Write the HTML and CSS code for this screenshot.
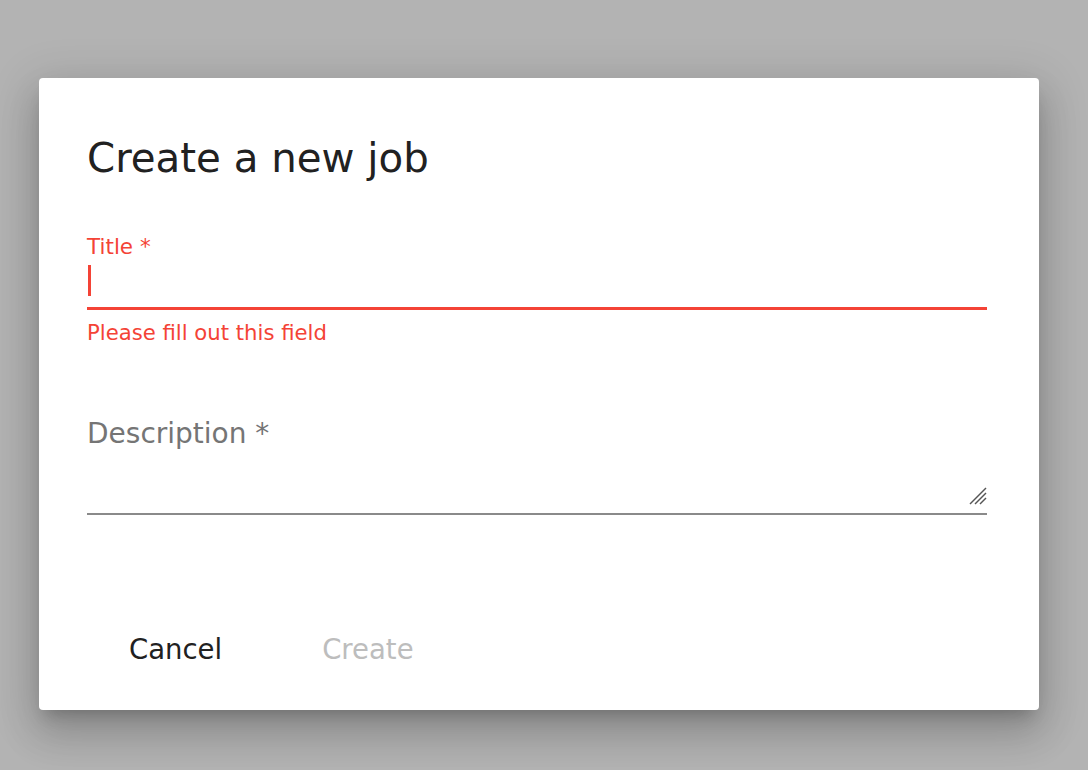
FILE: index.html
```html
<!DOCTYPE html>
<html>
<head>
<meta charset="utf-8">
<link rel="stylesheet" href="styles.css">
</head>
<body>
<div class="backdrop">
  <div class="dialog">
    <h1 class="dialog-title">Create a new job</h1>
    <div class="field field-error">
      <label class="field-label">Title *</label>
      <div class="field-input"><span class="caret"></span></div>
      <div class="field-help">Please fill out this field</div>
    </div>
    <div class="field field-desc">
      <div class="desc-box">
        <span class="desc-label">Description *</span>
        <textarea class="desc-area"></textarea>
        <svg class="resizer" width="18" height="18" viewBox="0 0 18 18">
          <line x1="1" y1="17" x2="17" y2="1" />
          <line x1="6" y1="17" x2="17" y2="6" />
          <line x1="11" y1="17" x2="17" y2="11" />
        </svg>
      </div>
    </div>
    <div class="actions">
      <button class="btn">Cancel</button>
      <button class="btn btn-disabled">Create</button>
    </div>
  </div>
</div>
</body>
</html>
```
FILE: styles.css
```css
html, body {
  margin: 0;
  padding: 0;
  height: 100%;
}
body {
  font-family: "DejaVu Sans", sans-serif;
  background: #b3b3b3;
}
.backdrop {
  height: 100%;
  display: flex;
  padding: 78px 0 0 39px;
  box-sizing: border-box;
}
.dialog {
  width: 1000px;
  height: 632px;
  background: #fff;
  border-radius: 4px;
  box-shadow: 0 11px 15px -7px rgba(0,0,0,0.2), 0 24px 38px 3px rgba(0,0,0,0.14), 0 9px 46px 8px rgba(0,0,0,0.12);
  padding: 0 52px 0 48px;
  box-sizing: border-box;
  display: flex;
  flex-direction: column;
}
.dialog-title {
  margin: 0;
  padding-top: 57px;
  font-weight: normal;
  font-size: 40.3px;
  line-height: 48px;
  color: #212121;
}
.field {
  display: flex;
  flex-direction: column;
}
.field-error {
  margin-top: 51px;
}
.field-label {
  font-size: 21.5px;
  line-height: 26px;
  color: #f44336;
}
.field-input {
  height: 50px;
  border-bottom: 3px solid #f44336;
  display: flex;
  align-items: flex-start;
  padding-top: 5px;
  box-sizing: border-box;
}
.caret {
  width: 2.5px;
  height: 31px;
  margin-left: 1px;
  background: #f44336;
}
.field-help {
  font-size: 21.2px;
  line-height: 26px;
  margin-top: 10px;
  color: #f44336;
}
.field-desc {
  margin-top: 71px;
}
.desc-box {
  position: relative;
  border-bottom: 2px solid #8a8a8a;
  height: 98px;
  box-sizing: border-box;
}
.desc-label {
  position: absolute;
  left: 0;
  top: 0;
  font-size: 28px;
  line-height: 34px;
  color: #757575;
  pointer-events: none;
}
.desc-area {
  display: block;
  width: 100%;
  height: 96px;
  border: none;
  outline: none;
  margin: 0;
  padding: 0;
  resize: none;
  background: transparent;
  font-family: inherit;
}
.resizer {
  position: absolute;
  right: 0;
  bottom: 8px;
  stroke: #555;
  stroke-width: 1.4;
}
.actions {
  margin-top: auto;
  margin-bottom: 35px;
  display: flex;
  gap: 16px;
}
.btn {
  font-family: "DejaVu Sans", sans-serif;
  font-size: 27.5px;
  line-height: 52px;
  background: none;
  border: none;
  padding: 0 42px;
  color: #212121;
  cursor: pointer;
}
.btn-disabled {
  color: #bdbdbd;
}
```
